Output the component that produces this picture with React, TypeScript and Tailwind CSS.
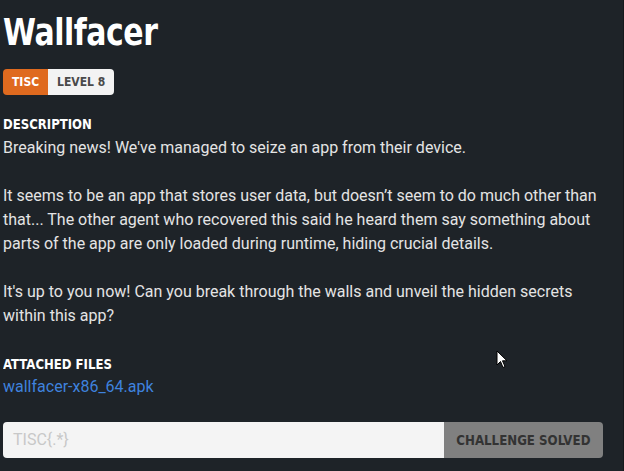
import React from "react";

const head = { fontFamily: '"DejaVu Sans Condensed", "DejaVu Sans", sans-serif' };

export default function App() {
  return (
    <div className="relative h-[471px] w-[624px] overflow-hidden bg-[#1e2328] text-[#e4e4e4]" style={{ fontFamily: 'Roboto, "Noto Sans", sans-serif' }}>
      <div className="absolute right-0 top-0 h-full w-px bg-[#15191c]" />
      <div className="flex w-[603px] flex-col pl-[3px] pt-[9px]">
        <h1 className="origin-left scale-x-[0.875] text-[38px] font-bold leading-[46px] tracking-[-0.5px] text-white" style={head}>Wallfacer</h1>
        <div className="mt-[14px] flex">
          <span className="flex h-[26px] items-center rounded-l-[4px] bg-[#df6a1f] px-[9px] text-[12px] font-bold text-white" style={head}>TISC</span>
          <span className="flex h-[26px] items-center rounded-r-[4px] bg-[#f3f3f3] px-[9px] text-[12px] font-bold text-[#4a4a4a]" style={head}>LEVEL 8</span>
        </div>
        <div className="mt-[20px] origin-left scale-x-[0.93] text-[14px] font-bold leading-[18px] text-white" style={head}>DESCRIPTION</div>
        <div className="mt-[3px] text-[16px] leading-[24px]">
          <p>Breaking news! We've managed to seize an app from their device.</p>
          <p className="mt-[24px]">It seems to be an app that stores user data, but doesn’t seem to do much other than that... The other agent who recovered this said he heard them say something about parts of the app are only loaded during runtime, hiding crucial details.</p>
          <p className="mt-[24px]">It's up to you now! Can you break through the walls and unveil the hidden secrets within this app?</p>
        </div>
        <div className="mt-[27px] origin-left scale-x-[0.93] text-[14px] font-bold leading-[18px] text-white" style={head}>ATTACHED FILES</div>
        <a className="mt-[2px] text-[16px] leading-[24px] text-[#3f82de]">wallfacer-x86_64.apk</a>
        <div className="mt-[23px] flex h-[36px]">
          <div className="flex flex-1 items-center rounded-l-[4px] bg-[#f4f4f4] px-[10px] text-[16px] text-[#c8c8c8]">TISC{'{.*}'}</div>
          <div className="flex w-[159px] items-center justify-center rounded-r-[4px] bg-[#808080] text-[#333]">
            <span className="scale-x-[0.94] text-[14px] font-bold" style={head}>CHALLENGE SOLVED</span>
          </div>
        </div>
      </div>
      <svg className="absolute left-[496px] top-[350px]" width="12" height="19" viewBox="0 0 12 19">
        <path d="M1 1 L1 15 L4.5 11.5 L7 17.5 L9 16.5 L6.5 10.8 L11 10.8 Z" fill="white" stroke="black" strokeWidth="1" />
      </svg>
    </div>
  );
}
